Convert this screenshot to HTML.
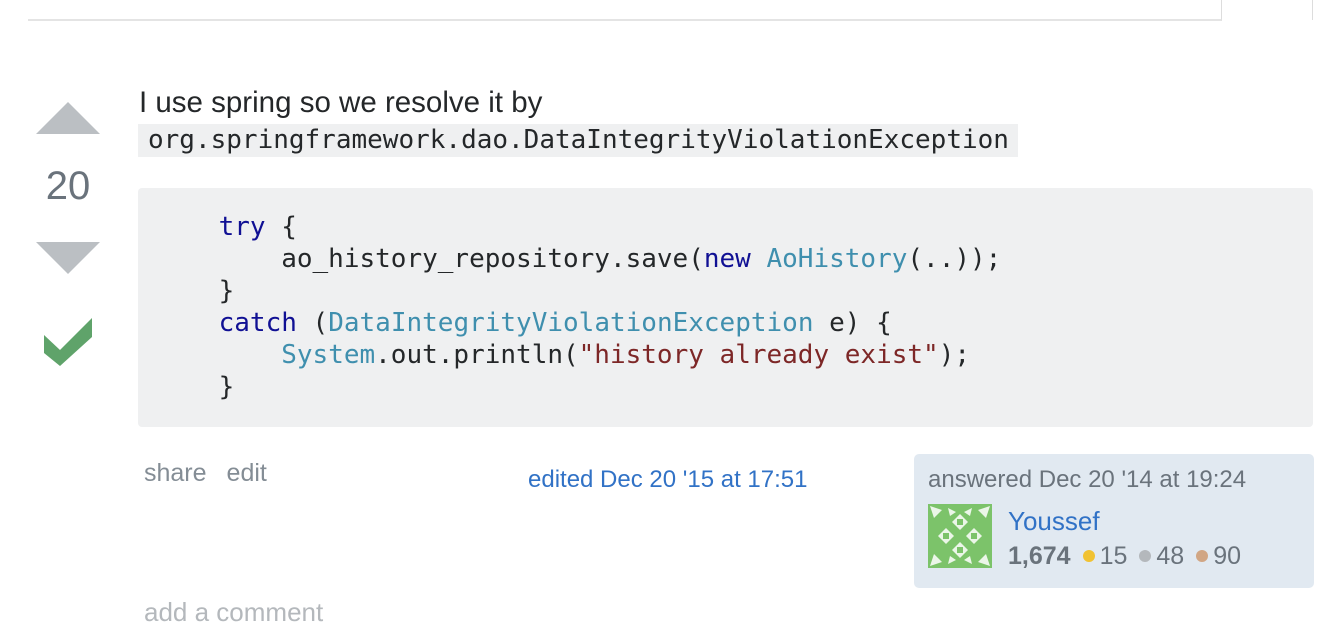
<!DOCTYPE html>
<html><head><style>
body{margin:0;width:1324px;height:638px;background:#fff;position:relative;overflow:hidden;font-family:"Liberation Sans",Arial,sans-serif;}
.a{position:absolute;white-space:pre;}
.code{font-family:"DejaVu Sans Mono","Liberation Mono",monospace;font-size:26px;color:#242729;}
.k{color:#101094}.t{color:#3f8fae}.s{color:#7d2727}
.d{display:inline-block;width:12px;height:12px;border-radius:50%;margin:0 5px 0 12px;vertical-align:2px}
</style></head><body>
<div class="a" style="left:28px;top:0;width:1193px;height:19px;border-right:1px solid #ddd;border-bottom:2px solid #e4e4e4;"></div>
<div class="a" style="left:1312px;top:0;width:1px;height:20px;background:#ddd;"></div>
<svg class="a" style="left:0;top:0" width="140" height="400">
<polygon points="36,134 100,134 68,102" fill="#bbbfc3"/>
<polygon points="36,242 100,242 68,274" fill="#bbbfc3"/>
<polygon points="44,335 60,350 92,318 92,337 60,366 44,353" fill="#5fa36a"/>
</svg>
<div class="a" style="left:36px;top:164px;width:64px;text-align:center;font-size:40px;color:#6a737c;">20</div>
<div class="a" style="left:139px;top:86px;font-size:29.5px;color:#242729;">I use spring so we resolve it by</div>
<div class="a code" style="left:138px;top:124px;width:880px;height:33px;background:#eff0f1;line-height:33px;padding-left:10px;box-sizing:border-box;">org.springframework.dao.DataIntegrityViolationException</div>
<div class="a" style="left:138px;top:188px;width:1175px;height:239px;background:#eff0f1;border-radius:4px;"></div>
<div class="a code" style="left:156px;top:211px;line-height:32px;">    <span class="k">try</span> {
        ao_history_repository.save(<span class="k">new</span> <span class="t">AoHistory</span>(..));
    }
    <span class="k">catch</span> (<span class="t">DataIntegrityViolationException</span> e) {
        <span class="t">System</span>.out.println(<span class="s">"history already exist"</span>);
    }</div>
<div class="a" style="left:144px;top:459px;font-size:25px;color:#848d95;">share<span style="margin-left:20px">edit</span></div>
<div class="a" style="left:528px;top:466px;font-size:24px;color:#3172c6;">edited Dec 20 '15 at 17:51</div>
<div class="a" style="left:914px;top:454px;width:400px;height:134px;background:#e1e9f1;border-radius:5px;"></div>
<div class="a" style="left:928px;top:466px;font-size:24px;color:#6a737c;">answered Dec 20 '14 at 19:24</div>
<svg class="a" style="left:928px;top:504px" width="64" height="64">
<rect width="64" height="64" fill="#7cc36a"/>
<g fill="#fff" opacity=".85">
<polygon points="32,10 40,18 32,26 24,18"/><polygon points="32,38 40,46 32,54 24,46"/>
<polygon points="18,24 26,32 18,40 10,32"/><polygon points="46,24 54,32 46,40 38,32"/>
<polygon points="2,2 14,6 6,14"/><polygon points="62,2 50,6 58,14"/><polygon points="2,62 14,58 6,50"/><polygon points="62,62 50,58 58,50"/>
<polygon points="20,4 28,8 22,12"/><polygon points="44,4 36,8 42,12"/><polygon points="20,60 28,56 22,52"/><polygon points="44,60 36,56 42,52"/>
</g>
<g fill="#7cc36a"><rect x="29" y="15" width="6" height="6"/><rect x="29" y="43" width="6" height="6"/><rect x="15" y="29" width="6" height="6"/><rect x="43" y="29" width="6" height="6"/></g>
</svg>
<div class="a" style="left:1008px;top:506px;font-size:26px;color:#3172c6;">Youssef</div>
<div class="a" style="left:1008px;top:542px;font-size:25px;color:#6a737c;"><b>1,674</b><span class="d" style="background:#f1c232"></span>15<span class="d" style="background:#b4b8bc"></span>48<span class="d" style="background:#d1a684"></span>90</div>
<div class="a" style="left:144px;top:597px;font-size:26px;color:#b4b8bc;">add a comment</div>
</body></html>
